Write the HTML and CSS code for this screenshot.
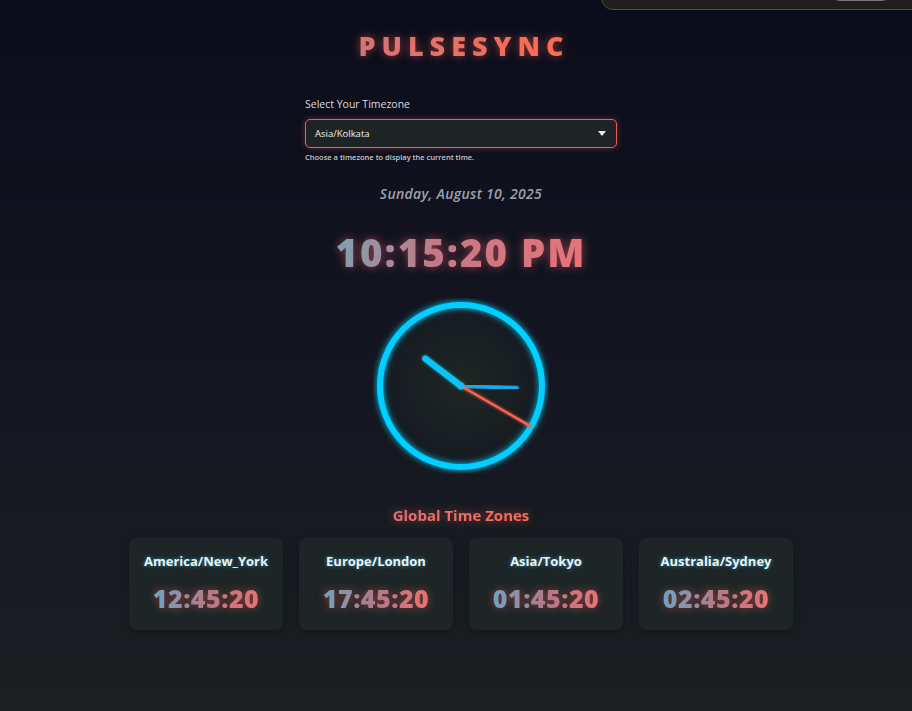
FILE: index.html
```html
<!DOCTYPE html>
<html lang="en">
<head>
<meta charset="utf-8">
<title>PulseSync</title>
<link rel="stylesheet" href="styles.css">
</head>
<body>
<div class="toast"><span class="toast-btn"></span></div>
<main class="page">
  <h1 class="brand">PULSESYNC</h1>

  <section class="picker">
    <label class="picker-label" for="tz">Select Your Timezone</label>
    <div class="select">
      <span class="select-value">Asia/Kolkata</span>
      <svg class="select-arrow" width="8" height="5" viewBox="0 0 8 5"><path d="M0 0h8L4 5z" fill="#e8e8e8"/></svg>
    </div>
    <p class="picker-help">Choose a timezone to display the current time.</p>
  </section>

  <p class="date">Sunday, August 10, 2025</p>
  <p class="time">10:15:20 PM</p>

  <div class="clock">
    <svg class="clock-svg" width="176" height="176" viewBox="0 0 176 176">
      <defs>
        <radialGradient id="face" cx="50%" cy="50%" r="50%">
          <stop offset="0" stop-color="#1f2724"/>
          <stop offset="1" stop-color="#151a21"/>
        </radialGradient>
        <filter id="glow" x="-30%" y="-30%" width="160%" height="160%">
          <feGaussianBlur stdDeviation="3" result="b"/>
          <feMerge><feMergeNode in="b"/><feMergeNode in="SourceGraphic"/></feMerge>
        </filter>
        <filter id="glow2" x="-30%" y="-30%" width="160%" height="160%">
          <feGaussianBlur stdDeviation="1.5" result="b"/>
          <feMerge><feMergeNode in="b"/><feMergeNode in="SourceGraphic"/></feMerge>
        </filter>
      </defs>
      <circle cx="88" cy="88" r="81" fill="url(#face)"/>
      <circle cx="88" cy="88" r="81" fill="none" stroke="#00cfff" stroke-width="6" filter="url(#glow)"/>
      <line x1="88" y1="88" x2="52.3" y2="60.6" stroke="#10c4f4" stroke-width="6" stroke-linecap="round" filter="url(#glow2)"/>
      <line x1="88" y1="88" x2="144" y2="90" stroke="#1aa8e6" stroke-width="3.5" stroke-linecap="round" filter="url(#glow2)"/>
      <line x1="88" y1="88" x2="157" y2="128" stroke="#ff6450" stroke-width="2.2" stroke-linecap="round" filter="url(#glow2)"/>
      <circle cx="88" cy="88" r="3.5" fill="#20b8ec"/>
    </svg>
  </div>

  <h2 class="zones-title">Global Time Zones</h2>
  <div class="zones">
    <div class="zone"><div class="zone-name">America/New_York</div><div class="zone-time">12:45:20</div></div>
    <div class="zone"><div class="zone-name">Europe/London</div><div class="zone-time">17:45:20</div></div>
    <div class="zone"><div class="zone-name">Asia/Tokyo</div><div class="zone-time">01:45:20</div></div>
    <div class="zone"><div class="zone-name">Australia/Sydney</div><div class="zone-time">02:45:20</div></div>
  </div>
</main>
</body>
</html>
```
FILE: styles.css
```css
* { box-sizing: border-box; }
html, body { margin: 0; height: 100%; }
body {
  background: linear-gradient(180deg, #0b0c1b 0%, #121520 45%, #1b1f22 100%);
  font-family: "Open Sans", "Noto Sans", sans-serif;
  color: #e6e6e6;
  overflow: hidden;
  position: relative;
}
.toast {
  position: absolute;
  top: -20px;
  left: 601px;
  width: 330px;
  height: 30px;
  background: #1f1e1c;
  border: 1px solid #4a4a4a;
  border-radius: 12px;
}
.toast-btn {
  position: absolute;
  left: 228px;
  bottom: 8px;
  width: 62px;
  height: 20px;
  border: 1px solid #7a7274;
  border-radius: 10px;
}
.page {
  padding: 27px 0 0 10px;
  display: flex;
  flex-direction: column;
  align-items: center;
}
.brand {
  margin: 0;
  font-size: 27px;
  line-height: 38px;
  font-weight: 800;
  letter-spacing: 6px;
  padding-left: 6px;
  background: linear-gradient(90deg, #d27578 0%, #ff6b4e 100%);
  -webkit-background-clip: text;
  background-clip: text;
  color: transparent;
  filter: drop-shadow(0 0 4px rgba(255, 100, 80, 0.55));
}
.picker {
  margin-top: 32px;
  width: 312px;
}
.picker-label {
  display: block;
  font-size: 10.5px;
  color: #dcdcdc;
  line-height: 14px;
  margin-bottom: 8px;
}
.select {
  height: 29px;
  border: 1px solid #e0625e;
  border-radius: 5px;
  background: #1e2425;
  box-shadow: 0 0 6px rgba(255, 90, 80, 0.35);
  display: flex;
  align-items: center;
  justify-content: space-between;
  padding: 0 10px 0 9px;
}
.select-value {
  font-size: 9.5px;
  color: #f0f0f0;
}
.picker-help {
  margin: 4px 0 0;
  font-size: 7.5px;
  font-weight: 600;
  color: #c8c8cc;
  line-height: 11px;
}
.date {
  margin: 21px 0 0;
  font-size: 14px;
  font-style: italic;
  font-weight: 600;
  color: #a0a0aa;
  letter-spacing: 0.3px;
  line-height: 20px;
}
.time {
  margin: 23px 0 0;
  font-size: 38.5px;
  font-weight: 800;
  letter-spacing: 2px;
  line-height: 50px;
  background: linear-gradient(90deg, #7fa0b2 0%, #c27a86 40%, #e8727a 100%);
  -webkit-background-clip: text;
  background-clip: text;
  color: transparent;
  filter: drop-shadow(0 0 5px rgba(230, 90, 100, 0.6));
}
.clock {
  margin-top: 21px;
  width: 176px;
  height: 176px;
}
.clock-svg { display: block; }
.zones-title {
  margin: 31px 0 0;
  font-size: 15px;
  font-weight: 700;
  line-height: 20px;
  background: linear-gradient(90deg, #e27270 0%, #ff6a52 100%);
  -webkit-background-clip: text;
  background-clip: text;
  color: transparent;
  filter: drop-shadow(0 0 4px rgba(255, 100, 80, 0.5));
}
.zones {
  margin-top: 13px;
  display: flex;
  gap: 16px;
}
.zone {
  width: 154px;
  height: 92px;
  background: #1d2526;
  border-radius: 8px;
  box-shadow: 0 3px 8px rgba(0, 0, 0, 0.25);
  display: flex;
  flex-direction: column;
  align-items: center;
  padding-top: 14px;
}
.zone-name {
  font-size: 13px;
  font-weight: 700;
  color: #e6f4fb;
  line-height: 18px;
  text-shadow: 0 0 4px rgba(80, 200, 240, 0.6);
}
.zone-time {
  margin-top: 12px;
  font-size: 25px;
  font-weight: 800;
  line-height: 32px;
  letter-spacing: 0.5px;
  background: linear-gradient(90deg, #6fa2c2 0%, #b27a88 50%, #e87272 100%);
  -webkit-background-clip: text;
  background-clip: text;
  color: transparent;
  filter: drop-shadow(0 0 4px rgba(230, 90, 90, 0.55));
}
```
